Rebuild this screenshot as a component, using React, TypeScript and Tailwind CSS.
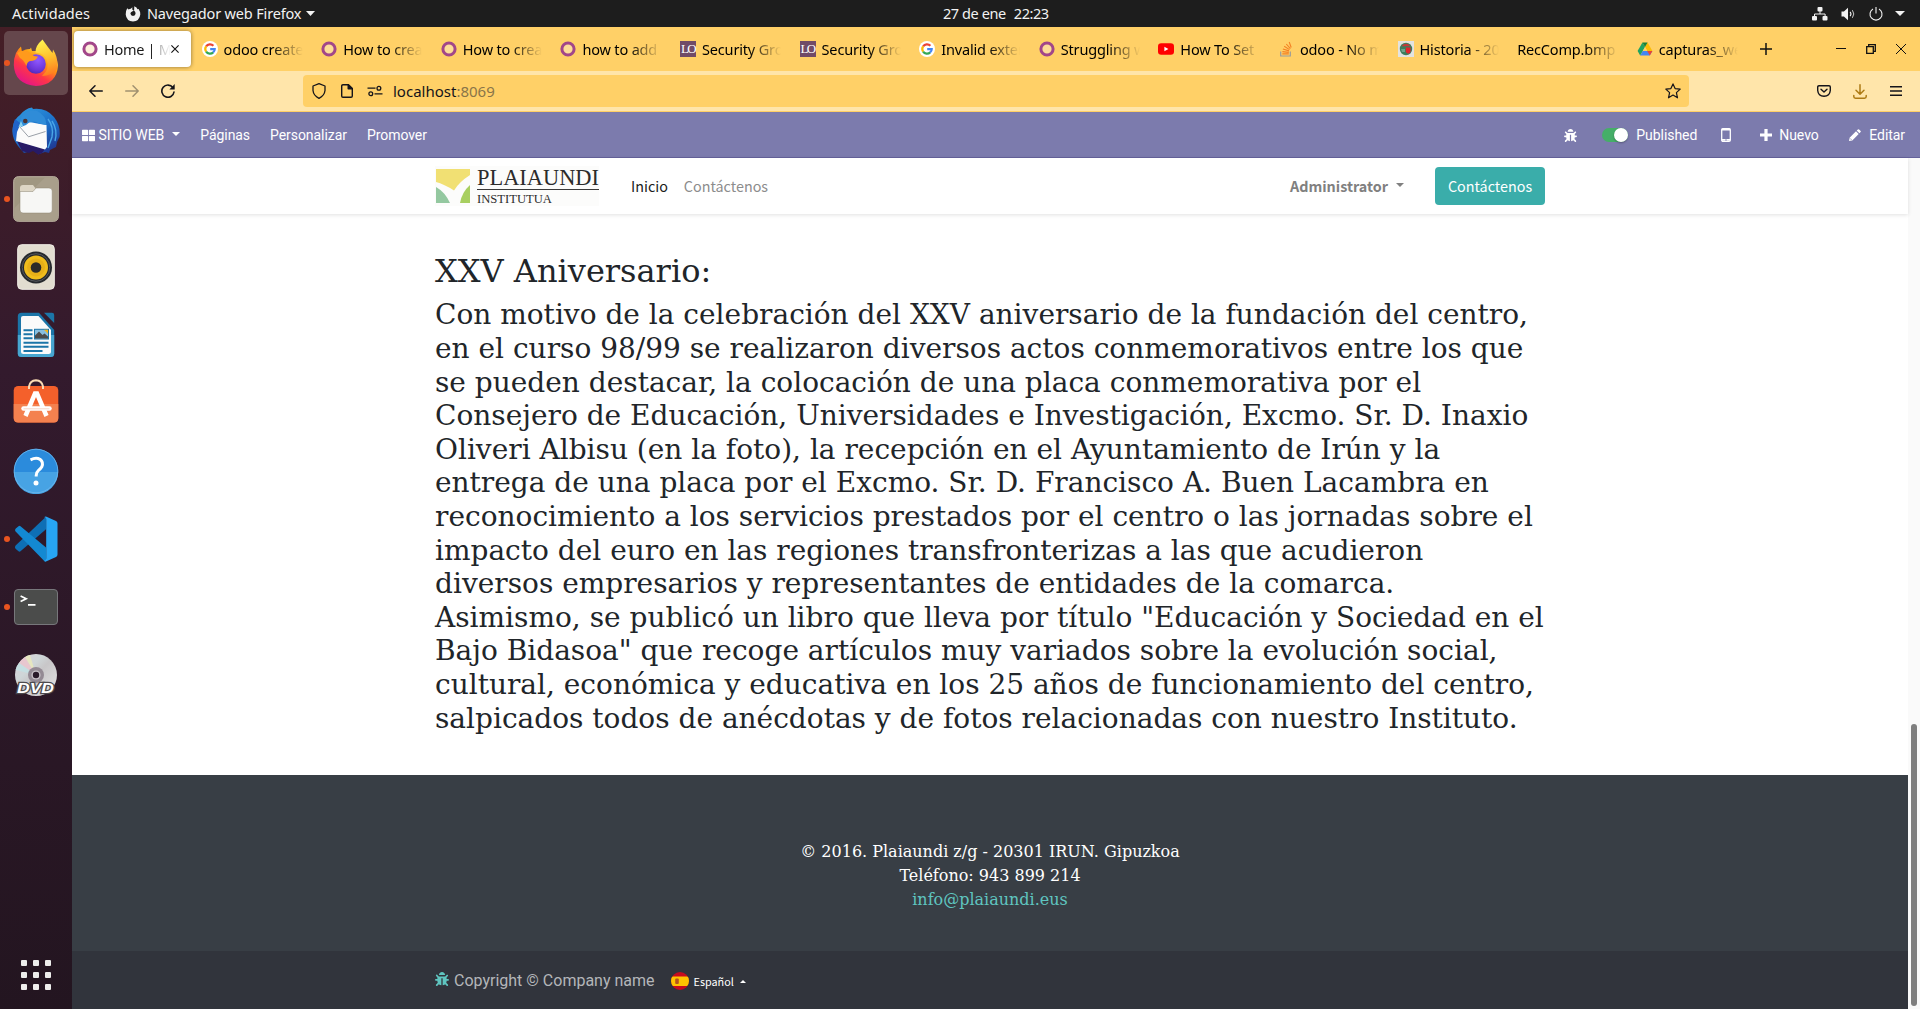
import type { ReactNode } from "react";
import { FaBug, FaThLarge } from "react-icons/fa";

const UI = "font-['Noto_Sans',sans-serif]";
const CJK = "font-['Noto_Sans_CJK_SC','Noto_Sans',sans-serif]";

/* ---------- small shared drawings ---------- */

function Caret({ className, up }: { className: string; up?: boolean }) {
  return (
    <svg viewBox="0 0 10 5" className={className} fill="currentColor" preserveAspectRatio="none">
      <path d={up ? "M0 5h10L5 0z" : "M0 0h10L5 5z"} />
    </svg>
  );
}

function OdooIcon() {
  return (
    <svg viewBox="0 0 16 16" className="size-4">
      <circle cx="8" cy="8" r="6.1" fill="#fbe6c0" fillOpacity=".55" stroke="#a24689" strokeWidth="3" />
    </svg>
  );
}

function GoogleIcon() {
  return (
    <svg viewBox="0 0 16 16" className="size-4">
      <circle cx="8" cy="8" r="8" fill="#fff" />
      <g fill="none" strokeWidth="2.2">
        <path d="M4.1 5.4A4.7 4.7 0 0 1 11.4 4.8" stroke="#ea4335" />
        <path d="M4.1 10.6A4.7 4.7 0 0 1 4.1 5.4" stroke="#fbbc05" />
        <path d="M11.2 11.4A4.7 4.7 0 0 1 4.1 10.6" stroke="#34a853" />
        <path d="M8.2 8.2H12.7A4.7 4.7 0 0 1 11.1 11.5" stroke="#4285f4" />
      </g>
    </svg>
  );
}

function LoIcon() {
  return (
    <span className="flex h-4 w-4 items-center justify-center bg-[#714b67] font-['Liberation_Serif',serif] text-[13px] leading-4 tracking-[-1.6px] text-white">
      LO
    </span>
  );
}

function YoutubeIcon() {
  return (
    <svg viewBox="0 0 16 16" className="size-4">
      <rect y="2.3" width="16" height="11.4" rx="3.2" fill="#f00" />
      <path d="M6.4 5.7v4.6L10.4 8z" fill="#fff" />
    </svg>
  );
}

function StackIcon() {
  return (
    <svg viewBox="0 0 16 16" className="size-4" fill="none">
      <path d="M2.7 10.500v4.500h9.600v-4.500" stroke="#9a9b9c" strokeWidth="1.200" />
      <g stroke="#f48024" strokeWidth="1.100">
        <path d="M4.300 12.900h6.500M4.400 10.600l6.400.8M4.900 8l6.100 1.900M6.200 5.300l5.300 3.300M8.300 3l4.100 4.600M11.200 1l2 5.500" />
      </g>
    </svg>
  );
}

function CrestIcon() {
  return (
    <svg viewBox="0 0 16 16" className="size-4">
      <rect width="16" height="16" fill="#e3e3e1" />
      <circle cx="8" cy="8" r="6.2" fill="#3d7d5c" />
      <path d="M3.4 5.2Q8 .4 12.6 5.2Z" fill="#c43a3a" />
      <path d="M7.8 6.4h4.8v3.8q-.6 2-2.4 2.6-2-.6-2.4-2.6z" fill="#e3232d" />
      <path d="M3 8h4v3H4z" fill="#6fa08b" />
    </svg>
  );
}

function DriveIcon() {
  return (
    <svg viewBox="0 0 16 16" className="size-4">
      <path d="M5.4 1.6 8 6.1 3.2 14.4.6 9.9z" fill="#1ea362" />
      <path d="M10.6 1.6 15.4 9.9h-5.2L8 6.1z" fill="#fbbc04" />
      <path d="M5.8 9.9h9.6l-2.6 4.5H3.2z" fill="#4285f4" />
      <path d="M15.4 9.9h-5.2l2.6 4.5z" fill="#ea4335" />
      <path d="M5.4 1.6 8 6.1l2.6-4.5z" fill="#188038" />
      <path d="m8 6.1 2.2 3.8H5.8z" fill="#ffd067" />
    </svg>
  );
}

/* ---------- GNOME top bar ---------- */

function TopBar() {
  return (
    <header className={`relative flex h-[27px] shrink-0 items-center bg-[#1d1d1d] text-[14.5px] text-[#f2f2f2] ${UI}`}>
      <span className="ml-3 w-[78px] tracking-[0.06px]">Actividades</span>
      <svg viewBox="0 0 16 16" className="ml-[35px] size-4" fill="#f2f2f2">
        <path d="M2.2 2.2 3.6 3.6Q4.6 2.8 5.7 2.8L7.4 1.2 7.2 3.6 8.8 4.6 7.2 5.4Q5.6 6 5.4 7.6 5.7 9.9 8 10.1 10.6 9.8 10.6 7.3 10.4 5.5 9.1 4.7L9.3.3Q12 1.4 12.5 3.2L13.6 2.9Q15.4 5.4 15.3 8.4 14.4 15 8 15.6 1.4 15 .7 8.4.7 4.6 2.2 2.2Z" />
      </svg>
      <span className="ml-[6px] tracking-[-0.16px]">Navegador web Firefox</span>
      <Caret className="ml-[5px] h-[5px] w-[9px]" />
      <div className="absolute inset-y-0 left-[943px] flex items-center gap-[8px] tracking-[-0.42px]">
        <span>27 de ene</span>
        <span>22:23</span>
      </div>
      <div className="ml-auto flex items-center pr-[15px]">
        <svg viewBox="0 0 16 14" className="mr-[13px] h-[14px] w-4" fill="#f2f2f2">
          <rect x="5.5" y="0" width="5" height="4.6" rx="1" />
          <rect x="0" y="9" width="5" height="4.6" rx="1" />
          <rect x="10.5" y="9" width="5" height="4.6" rx="1" />
          <path d="M8 4v3M2.5 9V7h10.6v2" fill="none" stroke="#f2f2f2" strokeWidth="1" />
        </svg>
        <svg viewBox="0 0 16 14" className="mr-[12px] h-[14px] w-4" fill="none" stroke="#f2f2f2">
          <path d="M.5 4.5h2.4L7 .8v12.4L2.9 9.5H.5z" fill="#f2f2f2" stroke="none" />
          <path d="M9.2 4.8q1.6 2.2 0 4.4" strokeWidth="1.2" />
          <path d="M11.4 3.2q2.8 3.8 0 7.6" strokeWidth="1" opacity=".8" />
        </svg>
        <svg viewBox="0 0 14 14" className="mr-[12px] size-[14px]" fill="none" stroke="#f2f2f2" strokeWidth="1.1">
          <path d="M4 1.9a6 6 0 1 0 6 0M7 0v6.5" />
        </svg>
        <Caret className="h-[5px] w-[10px]" />
      </div>
    </header>
  );
}

/* ---------- dock ---------- */

function FirefoxIcon() {
  return (
    <svg viewBox="0 0 46 48" className="h-12 w-[46px]">
      <defs>
        <linearGradient id="fxBody" x1=".85" y1=".1" x2=".25" y2=".95">
          <stop offset="0" stopColor="#fff44f" />
          <stop offset=".35" stopColor="#ff980e" />
          <stop offset=".65" stopColor="#ff3647" />
          <stop offset="1" stopColor="#e31587" />
        </linearGradient>
        <linearGradient id="fxFlame" x1=".4" y1="0" x2=".6" y2="1">
          <stop offset="0" stopColor="#fff44f" />
          <stop offset=".5" stopColor="#ffc02e" />
          <stop offset="1" stopColor="#ff7a1f" />
        </linearGradient>
        <radialGradient id="fxGlobe" cx=".6" cy=".3" r=".75">
          <stop offset="0" stopColor="#9059ff" />
          <stop offset=".7" stopColor="#6b35d8" />
          <stop offset="1" stopColor="#4a2bb5" />
        </radialGradient>
      </defs>
      <path d="M3 14Q5 10 8 7.500L9 13Q11 10 17 10L18 8.500 19 12 37 12Q44 18 45 26 44 46 23 47 1.500 45 .8 26 .7 19 3 14Z" fill="url(#fxBody)" />
      <path d="M29.500.5Q22 7 22.500 13.500 32 14 34 21 37 30 29 37 39 37 44 30 45.500 22 42 14L40 10.500 39.500 14Q34 7 29.500.5Z" fill="url(#fxFlame)" />
      <circle cx="23" cy="25" r="9.800" fill="url(#fxGlobe)" />
      <path d="M4 14Q10 9.500 17 14 21 18 25 17.500 23 22 17 22 14 23 13.500 27 10 20 7 19Z" fill="#ff9a1c" />
    </svg>
  );
}

function ThunderbirdIcon() {
  return (
    <svg viewBox="0 0 48 48" className="size-12">
      <defs>
        <linearGradient id="tbBody" x1=".3" y1="0" x2=".8" y2="1">
          <stop offset="0" stopColor="#2c93dc" />
          <stop offset=".5" stopColor="#1b6cc6" />
          <stop offset="1" stopColor="#20308a" />
        </linearGradient>
      </defs>
      <path d="M8 8Q13 1.500 20 .5L21 2Q34 .5 42 10 49 19 47.500 30L45 35 44 40 38 43 37 46 33 45 26 47.500 30 41 12 46 6 39Q-1 30 .8 20 2 12 8 8Z" fill="url(#tbBody)" />
      <path d="M3 12Q0 20 1 28L5 35 8 16Z" fill="#2163c9" />
      <path d="M5 34 33 42 30 46 26 47.500 21 44 17 46 10 44Z" fill="#271a66" />
      <path d="M8 18 12 15Q20 15 28 17L34.500 18 35 40 33 42.500 4 34 5 25Z" fill="#fbfbfb" />
      <path d="M7 19 16.500 29.800 33.500 24.500" fill="none" stroke="#9aa0a8" strokeWidth="1" />
      <path d="M10 9Q16 2 25 4 34 8 34.500 18L27 16.500Q20 12 14 18L9 20Q7 14 10 9Z" fill="#2f8cd8" />
      <path d="M9 14 6.500 20 11 19Z" fill="#87d0ee" />
      <circle cx="13.300" cy="14" r="2.300" fill="#4b3434" />
      <path d="M36 12Q42 20 40 30L36 41M40 14Q46 23 43 34" stroke="#4aa6e6" strokeWidth="1.400" fill="none" />
    </svg>
  );
}

function FilesIcon() {
  return (
    <svg viewBox="0 0 46 46" className="size-[46px]">
      <rect x=".7" y=".7" width="44.600" height="44.600" rx="4.500" fill="#a09781" stroke="#beb6a4" />
      <path d="M1.500 32 32 1.500h10q2.500 0 2.500 3v37q0 3-3 3h-37q-3 0-3-3z" fill="#a99f8b" />
      <path d="M7 12q0-3 3-3h10l3 4v8H7z" fill="#ddd6c5" />
      <path d="M7 15.500h13l3-3.500h13q3.200 0 3.200 3v19q0 3-3 3H10q-3 0-3-3z" fill="#f7f7f5" stroke="#8d8572" strokeWidth=".5" />
    </svg>
  );
}

function RhythmboxIcon() {
  return (
    <svg viewBox="0 0 38 46" className="h-[46px] w-[38px]">
      <rect x=".7" y=".7" width="36.600" height="44.600" rx="4" fill="#e2ddd0" stroke="#f0ede6" />
      <circle cx="19" cy="23.500" r="16" fill="#26292d" />
      <circle cx="19" cy="23.500" r="13.800" fill="none" stroke="#55585c" strokeWidth="1" />
      <circle cx="19" cy="23.500" r="12" fill="#f0bd1c" />
      <circle cx="19" cy="23.500" r="9" fill="#e7b018" />
      <circle cx="19" cy="23.500" r="5.300" fill="#2c2b29" />
    </svg>
  );
}

function WriterIcon() {
  return (
    <svg viewBox="0 0 38 46" className="h-[46px] w-[38px]">
      <path d="M4.500.8H22L37.200 18v23.500q0 3.500-3.500 3.500H4.500Q.8 45 .8 41.500v-37Q.8.8 4.500.8Z" fill="#1b75a8" />
      <path d="M.8 23h36.400v18.500q0 3.500-3.500 3.500H4.500Q.8 45 .8 41.500z" fill="#47a6d0" />
      <path d="M6 4h15.500L34 18v21.500q0 2.500-2.500 2.500H6.500Q4 42 4 39.500V6q0-2 2-2Z" fill="#fafafa" />
      <path d="M27 .8h8q2.200 0 2.200 2.200v8z" fill="#1c76a8" />
      <path d="M6.500 18.300h9M6.500 22.300h9M6.500 26.300h9M6.500 30.800h25M6.500 34.800h25M6.500 39h19" stroke="#1b75a8" strokeWidth="2" />
      <rect x="17.500" y="17.300" width="14" height="9.700" fill="#88bfe0" stroke="#1b75a8" strokeWidth="1" />
      <path d="M18 26.500v-3l4-4 3.500 3.500 2-1.500 3.500 3v2z" fill="#4b4b4b" />
      <path d="M27 17.800h4v4z" fill="#f2b51d" />
    </svg>
  );
}

function SoftwareIcon() {
  return (
    <svg viewBox="0 0 46 46" className="mt-[-4px] size-[46px]">
      <rect x=".7" y="8" width="44.600" height="36.500" rx="4.500" fill="#f4602b" />
      <path d="M.7 26h44.600v14q0 4.500-4.500 4.500H5.200Q.7 44.500 .7 40z" fill="#f4814f" />
      <path d="M16 11V8.500Q17 2.500 23 2.200 29 2.500 30 8.500V11" fill="none" stroke="#fbdcb4" strokeWidth="2" />
      <g stroke="#fff" fill="none">
        <path d="M12.500 38 22 15.500h2L33.500 38" strokeWidth="4.500" />
        <path d="M10.500 30.500h26" strokeWidth="4.500" strokeLinecap="round" />
      </g>
      <path d="M10.500 30.800h26" stroke="#f6d4c6" strokeWidth="1" />
    </svg>
  );
}

function HelpIcon() {
  return (
    <svg viewBox="0 0 46 46" className="size-[46px]">
      <circle cx="23" cy="23" r="22.200" fill="#2b8bdc" />
      <path d="M.8 24h44.400A22.200 22.200 0 0 1 .8 24Z" fill="#47a3e4" />
      <circle cx="23" cy="23" r="21.800" fill="none" stroke="#6db8ec" strokeWidth=".8" />
      <path d="M17.500 11.800q5.500-2.600 9.500-.5 3.800 3 1.800 7.500-1 1.800-3.300 3.600-2.300 2-2.300 5.200v1" fill="none" stroke="#fff" strokeWidth="3" />
      <circle cx="23" cy="35" r="2.500" fill="#fff" />
    </svg>
  );
}

function CodeIcon() {
  return (
    <svg viewBox="0 0 43 46" className="h-[46px] w-[43px]">
      <path d="M.6 29.500 31 .8v12.500L5.500 35.300q-1 .8-2 0L.8 33q-1.400-1.700-.2-3.500Z" fill="#0e6fb5" />
      <path d="M.6 15.500Q-.5 14 .8 12.500l2.700-2.300q1-.8 2 0L31 31.500v14q-1 .3-2-.8z" fill="#1389d2" />
      <path d="M31.500.7 41 5q1.500.8 1.500 2.500v31q0 1.700-1.500 2.500l-9.500 4.300q-1.500.4-2.700-.8 2.200.7 2.400-2V3q-.2-2.400-2.300-1.500 1.200-1.200 2.600-.8Z" fill="#27a5f3" />
    </svg>
  );
}

function TerminalIcon() {
  return (
    <div className="flex h-9 w-[44px] rounded-[4px] border border-[#77777b] bg-[#4b4c4b] pl-[5px] pt-px">
      <svg viewBox="0 0 16 12" className="mt-1 h-3 w-4" fill="none" stroke="#fff" strokeWidth="1.700">
        <path d="M.6.9 6.200 3.700.6 6.500M8 9.800h7.500" />
      </svg>
    </div>
  );
}

function DvdIcon() {
  return (
    <svg viewBox="0 0 44 46" className="h-[46px] w-[44px]">
      <defs>
        <linearGradient id="disc" x1=".1" y1=".1" x2=".9" y2=".9">
          <stop offset="0" stopColor="#d9d3d9" />
          <stop offset=".3" stopColor="#cfd6d8" />
          <stop offset=".5" stopColor="#c8c6c8" />
          <stop offset="1" stopColor="#e0dfe0" />
        </linearGradient>
      </defs>
      <circle cx="22" cy="23" r="21" fill="url(#disc)" />
      <path d="M22 23 5 11Q8 7 11 5Z" fill="#e8c7cf" />
      <path d="M22 23 11 5Q13 3.500 16 3Z" fill="#e6e6c0" />
      <path d="M22 23 1.500 18Q3 13 5 11Z" fill="#c6dfe2" />
      <circle cx="22" cy="23" r="8" fill="#948a94" />
      <circle cx="22" cy="23" r="4.600" fill="#c9c2c9" />
      <circle cx="22" cy="23" r="3.200" fill="#2a1a2a" />
      <text
        x="21.500"
        y="40.500"
        textAnchor="middle"
        textLength="37"
        lengthAdjust="spacingAndGlyphs"
        fontFamily="Liberation Sans, sans-serif"
        fontWeight="bold"
        fontStyle="italic"
        fontSize="14.500"
        fill="#fff"
        stroke="#4d4a4d"
        strokeWidth="2.400"
        paintOrder="stroke"
      >
        DVD
      </text>
    </svg>
  );
}

function DockItem({ children, running, active }: { children: ReactNode; running?: boolean; active?: boolean }) {
  return (
    <div className="flex h-[68px] w-full items-center">
      <span className={`relative z-10 -mr-[6px] ml-1 size-[6px] rounded-full ${running ? "bg-[#e95420]" : ""}`} />
      <div className={`flex size-16 items-center justify-center rounded-[5px] ${active ? "bg-[#65474c]" : ""}`}>{children}</div>
    </div>
  );
}

function Dock() {
  return (
    <aside className="flex w-[72px] shrink-0 flex-col bg-linear-to-b from-[#451e26] via-[#331a2d] via-35% to-[#231520] pt-[2px]">
      <DockItem running active><FirefoxIcon /></DockItem>
      <DockItem><ThunderbirdIcon /></DockItem>
      <DockItem running><FilesIcon /></DockItem>
      <DockItem><RhythmboxIcon /></DockItem>
      <DockItem><WriterIcon /></DockItem>
      <DockItem><SoftwareIcon /></DockItem>
      <DockItem><HelpIcon /></DockItem>
      <DockItem running><CodeIcon /></DockItem>
      <DockItem running><TerminalIcon /></DockItem>
      <DockItem><DvdIcon /></DockItem>
      <div className="mb-[19px] ml-[21px] mt-auto grid w-[30px] grid-cols-3 gap-[6px]">
        {Array.from({ length: 9 }, (_, i) => (
          <span key={i} className="size-[6px] rounded-[1px] bg-[#eeeeec]" />
        ))}
      </div>
    </aside>
  );
}

/* ---------- browser chrome ---------- */

const tabs: { title: string; icon?: ReactNode; active?: boolean }[] = [
  { title: "Home | My", icon: <OdooIcon />, active: true },
  { title: "odoo create", icon: <GoogleIcon /> },
  { title: "How to crea", icon: <OdooIcon /> },
  { title: "How to crea", icon: <OdooIcon /> },
  { title: "how to add", icon: <OdooIcon /> },
  { title: "Security Gro", icon: <LoIcon /> },
  { title: "Security Gro", icon: <LoIcon /> },
  { title: "Invalid exter", icon: <GoogleIcon /> },
  { title: "Struggling w", icon: <OdooIcon /> },
  { title: "How To Set", icon: <YoutubeIcon /> },
  { title: "odoo - No m", icon: <StackIcon /> },
  { title: "Historia - 20", icon: <CrestIcon /> },
  { title: "RecComp.bmp" },
  { title: "capturas_we", icon: <DriveIcon /> },
];

function TabStrip() {
  return (
    <div className={`flex h-11 items-center bg-[#ffd067] pl-[2px] text-[14.5px] text-black ${UI}`}>
      {tabs.map((t, i) => (
        <div
          key={i}
          className={`mr-[2.6px] flex h-9 w-[117px] shrink-0 items-center rounded-[4px] pl-2 ${
            t.active ? "bg-white pr-[12px] shadow-[0_0_4px_rgba(0,0,0,0.45)]" : "pr-2"
          }`}
        >
          {t.icon && <span className="mr-[6px] shrink-0">{t.icon}</span>}
          <span
            className={`mt-px flex-1 overflow-hidden whitespace-nowrap ${
              t.icon ? "" : "tracking-[-0.4px]"
            } ${
              t.active
                ? "tracking-[-0.3px] [mask-image:linear-gradient(to_left,transparent_0px,rgba(0,0,0,0.4)_14px,rgba(0,0,0,0.9)_20px)]"
                : "tracking-[-0.16px] [mask-image:linear-gradient(to_left,transparent,black_32px)]"
            }`}
          >
            {t.title}
          </span>
          {t.active && (
            <svg viewBox="0 0 8 8" className="size-2 shrink-0" stroke="#111" strokeWidth="1.100">
              <path d="m.4.4 7.200 7.200M7.600.4.400 7.600" />
            </svg>
          )}
        </div>
      ))}
      <svg viewBox="0 0 12 12" className="ml-[12px] size-3" stroke="#111" strokeWidth="1.500">
        <path d="M6 0v12M0 6h12" />
      </svg>
      <div className="ml-auto flex items-center pr-[14px]">
        <svg viewBox="0 0 10 10" className="mr-5 size-[10px]" stroke="#111"><path d="M0 4.500h10" /></svg>
        <svg viewBox="0 0 10 10" className="mr-5 size-[10px]" fill="none" stroke="#111" strokeWidth="1.300">
          <path d="M.7 2.700h6.600v6.600H.7zM2.700 2.500V.7h6.600v6.600H7.500" />
        </svg>
        <svg viewBox="0 0 10 10" className="size-[10px]" stroke="#111"><path d="m0 0 10 10M10 0 0 10" /></svg>
      </div>
    </div>
  );
}

function Toolbar() {
  return (
    <div className="flex h-[41px] items-center border-b border-[#ffd067] bg-[#ffe5aa] text-[#15141a]">
      <svg viewBox="0 0 14 12" className="ml-[17px] h-3 w-[14px]" fill="none" stroke="currentColor" strokeWidth="1.500" strokeLinecap="round" strokeLinejoin="round">
        <path d="M13.300 6H.8M6 .8.800 6 6 11.200" />
      </svg>
      <svg viewBox="0 0 14 12" className="ml-[22px] h-3 w-[14px] opacity-40" fill="none" stroke="currentColor" strokeWidth="1.500" strokeLinecap="round" strokeLinejoin="round">
        <path d="M.7 6h12.500M8 .8 13.200 6 8 11.200" />
      </svg>
      <svg viewBox="0 0 14 14" className="ml-[22px] size-[14px]" fill="none" stroke="currentColor" strokeWidth="1.600">
        <path d="M11.900 3.600A6.100 6.100 0 1 0 13 8" strokeLinecap="round" />
        <path d="M13.700 0v5.500H8.400z" fill="currentColor" stroke="none" />
      </svg>
      <div className={`ml-[128px] flex h-8 w-[1386px] items-center rounded-[4px] bg-[#ffd067] text-[15px] ${UI}`}>
        <svg viewBox="0 0 14 16" className="ml-[9px] h-4 w-[14px]" fill="none" stroke="currentColor" strokeWidth="1.300" strokeLinejoin="round">
          <path d="M7 .7 13 3v4.500q-.5 5-6 7.800-5.500-2.800-6-7.800V3z" />
        </svg>
        <svg viewBox="0 0 12 14" className="ml-[15px] h-[14px] w-3" fill="none" stroke="currentColor" strokeWidth="1.400" strokeLinejoin="round">
          <path d="M7.400.7H2Q.7.700.7 2v10q0 1.300 1.300 1.300h8q1.300 0 1.300-1.300V4.600z" />
          <path d="M7.200.7v4.100h4.100z" fill="currentColor" />
        </svg>
        <svg viewBox="0 0 16 12" className="ml-[14px] h-3 w-4" fill="none" stroke="currentColor" strokeWidth="1.300">
          <path d="M.5 3.200h8M7.500 8.800h8" />
          <circle cx="11.900" cy="3.200" r="1.900" />
          <circle cx="3.800" cy="8.800" r="1.900" />
        </svg>
        <span className="ml-[10px]">localhost<span className="text-[#8a7549]">:8069</span></span>
        <svg viewBox="0 0 16 16" className="ml-auto mr-2 size-4" fill="none" stroke="currentColor" strokeWidth="1.200" strokeLinejoin="round">
          <path d="m8 .9 2.100 4.700 5.100.5-3.800 3.500 1.100 5.200L8 12.100l-4.500 2.700 1.100-5.200L.8 6.100l5.100-.5z" />
        </svg>
      </div>
      <div className="ml-auto flex items-center pr-[18px]">
        <svg viewBox="0 0 14 12" className="mr-[22px] h-3 w-[14px]" fill="none" stroke="currentColor" strokeWidth="1.400" strokeLinecap="round" strokeLinejoin="round">
          <path d="M2 .7h10q1.300 0 1.300 1.300v3.500Q12.800 11 7 11.300 1.200 11 .7 5.500V2Q.7.700 2 .7Z" />
          <path d="M4 4.200 7 7l3-2.800" />
        </svg>
        <svg viewBox="0 0 14 15" className="mr-[23px] h-[15px] w-[14px]" fill="none" stroke="#ad7a14" strokeWidth="1.500" strokeLinecap="round" strokeLinejoin="round">
          <path d="M7 .8v9M3 6.200l4 4 4-4M.8 11.500v1q0 1.700 1.700 1.700h9q1.700 0 1.700-1.700v-1" />
        </svg>
        <svg viewBox="0 0 12 10" className="h-[10px] w-3" stroke="currentColor" strokeWidth="1.400">
          <path d="M0 .8h12M0 5h12M0 9.200h12" />
        </svg>
      </div>
    </div>
  );
}

/* ---------- site ---------- */

function EditorBar() {
  return (
    <nav className="flex h-[46px] shrink-0 items-center border-b border-[#65629b] bg-[#7c7bad] pt-px font-[Roboto,sans-serif] text-[14px] tracking-[-0.06px] text-white">
      <FaThLarge className="ml-[10px] size-[13px]" />
      <span className="ml-[3.500px]">SITIO WEB</span>
      <Caret className="ml-2 mt-[-2px] h-1 w-2" />
      <span className="ml-5">Páginas</span>
      <span className="ml-5">Personalizar</span>
      <span className="ml-5">Promover</span>
      <div className="ml-auto flex items-center pr-[15px]">
        <FaBug className="mr-[25px] size-[13px]" />
        <span className="mr-[8px] flex h-[14px] w-[26px] justify-end rounded-full bg-[#45ae68]">
          <span className="size-[14px] rounded-full bg-white shadow-[0_1px_2px_rgba(0,0,0,0.3)]" />
        </span>
        <span>Published</span>
        <svg viewBox="0 0 10 14" className="ml-[24px] h-[14px] w-[10px]" fill="none" stroke="#fff" strokeWidth="1.300">
          <rect x=".7" y=".7" width="8.600" height="12.600" rx="1.300" />
          <path d="M.7 1.500h8.600M.7 11.800h8.600" strokeWidth="1.800" />
          <path d="M4.500 12h1" stroke="#7c7bad" />
        </svg>
        <svg viewBox="0 0 12 12" className="ml-[29px] size-3" fill="#fff">
          <path d="M4.400 0h3.200v4.400H12v3.200H7.600V12H4.400V7.600H0V4.400h4.400z" />
        </svg>
        <span className="ml-[7px] w-10">Nuevo</span>
        <svg viewBox="0 0 12 12" className="ml-[30px] size-3" fill="#fff">
          <path d="M8.900.4q.6-.5 1.200 0l1.500 1.500q.5.600 0 1.200L10.400 4.300 7.700 1.600zM7 2.300 9.700 5 3.300 11.400 0 12 .6 8.700z" />
          <path d="M1.100 9.400 2.600 10.900" stroke="#7c7bad" strokeWidth=".7" />
        </svg>
        <span className="ml-[8px]">Editar</span>
      </div>
    </nav>
  );
}

function Logo() {
  return (
    <svg viewBox="0 0 164 40" className="h-10 w-[164px]">
      <rect width="164" height="40" fill="#fcfcfb" />
      <path d="M1 3h34v6Q24 16 19 24.500 9 18 1 16Z" fill="#f1e073" />
      <path d="M1 21Q10 26 15 37H1Z" fill="#94c8a0" />
      <path d="M25 37q2-11 10-18v18Z" fill="#a8cf60" />
      <g fontFamily="Liberation Serif, serif" fill="#2c2c2c">
        <text x="42" y="19" fontSize="24" textLength="122" lengthAdjust="spacingAndGlyphs">PLAIAUNDI</text>
        <text x="42" y="36.500" fontSize="13.500" textLength="75" lengthAdjust="spacingAndGlyphs">INSTITUTUA</text>
      </g>
      <path d="M42 23.500h122" stroke="#3a3a3a" strokeWidth="1.200" />
    </svg>
  );
}

function SiteHeader() {
  return (
    <header className="relative z-10 flex h-14 shrink-0 justify-center bg-white shadow-[0_1px_4px_rgba(0,0,0,0.12)]">
      <div className={`flex w-[1110px] items-center text-[14.35px] text-[#8c8c8c] ${CJK}`}>
        <Logo />
        <span className="ml-8 text-[#1a1a1a]">Inicio</span>
        <span className="ml-4">Contáctenos</span>
        <span className="ml-auto font-bold text-[#808080]">Administrator</span>
        <Caret className="ml-2 mt-[-3px] h-1 w-2 text-[#808080]" />
        <span className="ml-[31px] flex h-[38px] w-[110px] items-center justify-center rounded-[4px] bg-[#3aadaa] text-white">Contáctenos</span>
      </div>
    </header>
  );
}

const story = [
  "Con motivo de la celebración del XXV aniversario de la fundación del centro,",
  "en el curso 98/99 se realizaron diversos actos conmemorativos entre los que",
  "se pueden destacar, la colocación de una placa conmemorativa por el",
  "Consejero de Educación, Universidades e Investigación, Excmo. Sr. D. Inaxio",
  "Oliveri Albisu (en la foto), la recepción en el Ayuntamiento de Irún y la",
  "entrega de una placa por el Excmo. Sr. D. Francisco A. Buen Lacambra en",
  "reconocimiento a los servicios prestados por el centro o las jornadas sobre el",
  "impacto del euro en las regiones transfronterizas a las que acudieron",
  "diversos empresarios y representantes de entidades de la comarca.",
  "Asimismo, se publicó un libro que lleva por título \"Educación y Sociedad en el",
  "Bajo Bidasoa\" que recoge artículos muy variados sobre la evolución social,",
  "cultural, económica y educativa en los 25 años de funcionamiento del centro,",
  "salpicados todos de anécdotas y de fotos relacionadas con nuestro Instituto.",
];

function Article() {
  return (
    <main className="flex flex-1 justify-center font-['DejaVu_Serif',serif] text-[#212529]">
      <div className="w-[1110px] pt-[38px]">
        <h2 className="text-[32px] leading-[38.4px]">XXV Aniversario:</h2>
        <p className="mt-2 whitespace-nowrap text-[28px] leading-[33.6px]">
          {story.map((line) => (
            <span key={line} className="block">{line}</span>
          ))}
        </p>
      </div>
    </main>
  );
}

function SpainFlag() {
  return (
    <svg viewBox="0 0 18 18" className="size-[18px]">
      <clipPath id="round"><circle cx="9" cy="9" r="9" /></clipPath>
      <g clipPath="url(#round)">
        <rect width="18" height="18" fill="#c60b1e" />
        <rect y="4.500" width="18" height="9.500" fill="#ffc400" />
        <rect x="4.200" y="6.500" width="3.600" height="5.500" rx="1" fill="#b5541c" />
      </g>
    </svg>
  );
}

function Footer() {
  return (
    <footer className="shrink-0">
      <div className="h-44 bg-[#383e45] pt-[65px] text-center font-['DejaVu_Serif',serif] text-base leading-6 text-white">
        <p>© 2016. Plaiaundi z/g - 20301 IRUN. Gipuzkoa</p>
        <p>Teléfono: 943 899 214</p>
        <p className="text-[#5fc5c0]">info@plaiaundi.eus</p>
      </div>
      <div className="flex h-[58px] justify-center bg-[#31343c]">
        <div className="flex w-[1110px] items-center pt-[2px] font-[Roboto,sans-serif] text-base text-[#b4b6b9]">
          <FaBug className="mb-[5px] size-[14px] text-[#5fc5c0]" />
          <span className="ml-[5px]">Copyright © Company name</span>
          <span className="ml-[16px]"><SpainFlag /></span>
          <span className={`ml-[5px] text-[10.800px] text-white ${CJK}`}>Español</span>
          <Caret up className="ml-[6px] h-[3px] w-[6px] text-white" />
        </div>
      </div>
    </footer>
  );
}

export default function App() {
  return (
    <div className="flex h-[1009px] w-[1920px] flex-col overflow-hidden bg-white">
      <TopBar />
      <div className="flex min-h-0 flex-1">
        <Dock />
        <div className="flex min-w-0 flex-1 flex-col">
          <TabStrip />
          <Toolbar />
          <EditorBar />
          <div className="flex min-h-0 flex-1">
            <div className="flex min-w-0 flex-1 flex-col">
              <SiteHeader />
              <Article />
              <Footer />
            </div>
            <div className="flex w-3 flex-col items-center justify-end bg-[#fafafa] pb-[3px]">
              <div className="h-[282px] w-[6px] rounded-full bg-[#7f7f7f]" />
            </div>
          </div>
        </div>
      </div>
    </div>
  );
}
